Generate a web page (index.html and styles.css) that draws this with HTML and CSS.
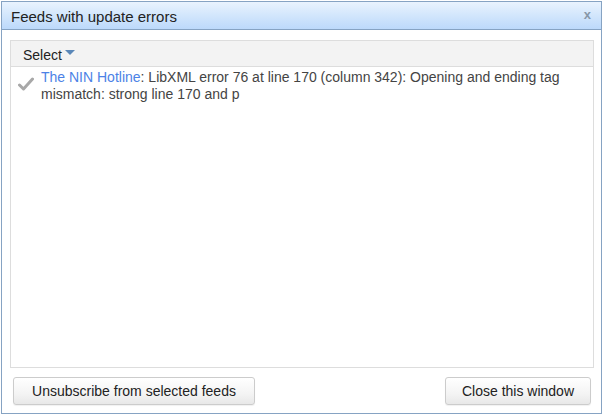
FILE: index.html
```html
<!DOCTYPE html>
<html>
<head>
<meta charset="utf-8">
<link rel="stylesheet" href="styles.css">
</head>
<body>
<div class="dialog">
  <div class="titlebar">
    <span class="title">Feeds with update errors</span>
    <span class="close">x</span>
  </div>
  <div class="content">
    <div class="panel">
      <div class="toolbar">
        <span class="select">Select <span class="arrow"></span></span>
      </div>
      <ul class="list">
        <li class="row">
          <svg class="check" width="16" height="14" viewBox="0 0 16 14"><path d="M1.5 8 L5.5 12 L14.5 2" fill="none" stroke="#a8a8a8" stroke-width="3" stroke-linejoin="round" stroke-linecap="round"/></svg>
          <div class="msg"><a class="feed">The NIN Hotline</a>: LibXML error 76 at line 170 (column 342): Opening and ending tag mismatch: strong line 170 and p</div>
        </li>
      </ul>
    </div>
    <div class="buttons">
      <button class="btn btn-wide">Unsubscribe from selected feeds</button>
      <button class="btn btn-close">Close this window</button>
    </div>
  </div>
</div>
</body>
</html>
```
FILE: styles.css
```css
html, body {
  margin: 0;
  padding: 0;
  background: #ffffff;
}
body {
  font-family: "Liberation Sans", Arial, sans-serif;
  font-size: 14px;
  color: #333;
}
.dialog {
  margin: 1px 0 0 1px;
  width: 599px;
  height: 411px;
  border: 1px solid #86a3c3;
  display: flex;
  flex-direction: column;
  background: #fff;
}
.titlebar {
  height: 27px;
  border-bottom: 1px solid #86a3c3;
  background: linear-gradient(to bottom, #e9f3fe 0%, #d2e6fc 50%, #bcd9fb 100%);
  display: flex;
  align-items: center;
  justify-content: space-between;
  padding: 0 10px 0 9px;
}
.title {
  font-size: 15px;
  color: #222;
  position: relative;
  top: 1px;
}
.close {
  font-size: 13px;
  font-weight: bold;
  color: #8797a8;
  position: relative;
  top: -1px;
}
.content {
  flex: 1;
  display: flex;
  flex-direction: column;
  padding: 10px 7px 0 8px;
}
.panel {
  height: 326px;
  border: 1px solid #dddddd;
  display: flex;
  flex-direction: column;
}
.toolbar {
  height: 25px;
  background: #f3f3f3;
  border-bottom: 1px solid #dddddd;
  display: flex;
  align-items: center;
  padding-left: 12px;
}
.select {
  color: #222;
  display: flex;
  align-items: center;
  position: relative;
  top: 1px;
}
.arrow {
  display: inline-block;
  width: 0;
  height: 0;
  margin-left: 3px;
  border-left: 5px solid transparent;
  border-right: 5px solid transparent;
  border-top: 5px solid #5a87b8;
  position: relative;
  top: -2px;
}
.list {
  list-style: none;
  margin: 0;
  padding: 2px 0 0 0;
}
.row {
  display: flex;
  align-items: flex-start;
  line-height: 17px;
}
.check {
  margin: 8px 7px 0 7px;
  flex: none;
}
.msg {
  color: #444;
  padding-right: 20px;
}
.feed {
  color: #4c82e6;
}
.buttons {
  display: flex;
  justify-content: space-between;
  padding: 9px 3px 0 3px;
}
.btn {
  height: 28px;
  border: 1px solid #cccccc;
  border-radius: 3px;
  background: linear-gradient(to bottom, #ffffff 0%, #f4f4f4 60%, #e8e8e8 100%);
  font-family: "Liberation Sans", Arial, sans-serif;
  font-size: 14px;
  color: #222;
  padding: 0;
  white-space: nowrap;
  box-shadow: 0 1px 1px rgba(0,0,0,0.06);
}
.btn-wide {
  width: 242px;
}
.btn-close {
  width: 146px;
}
```
